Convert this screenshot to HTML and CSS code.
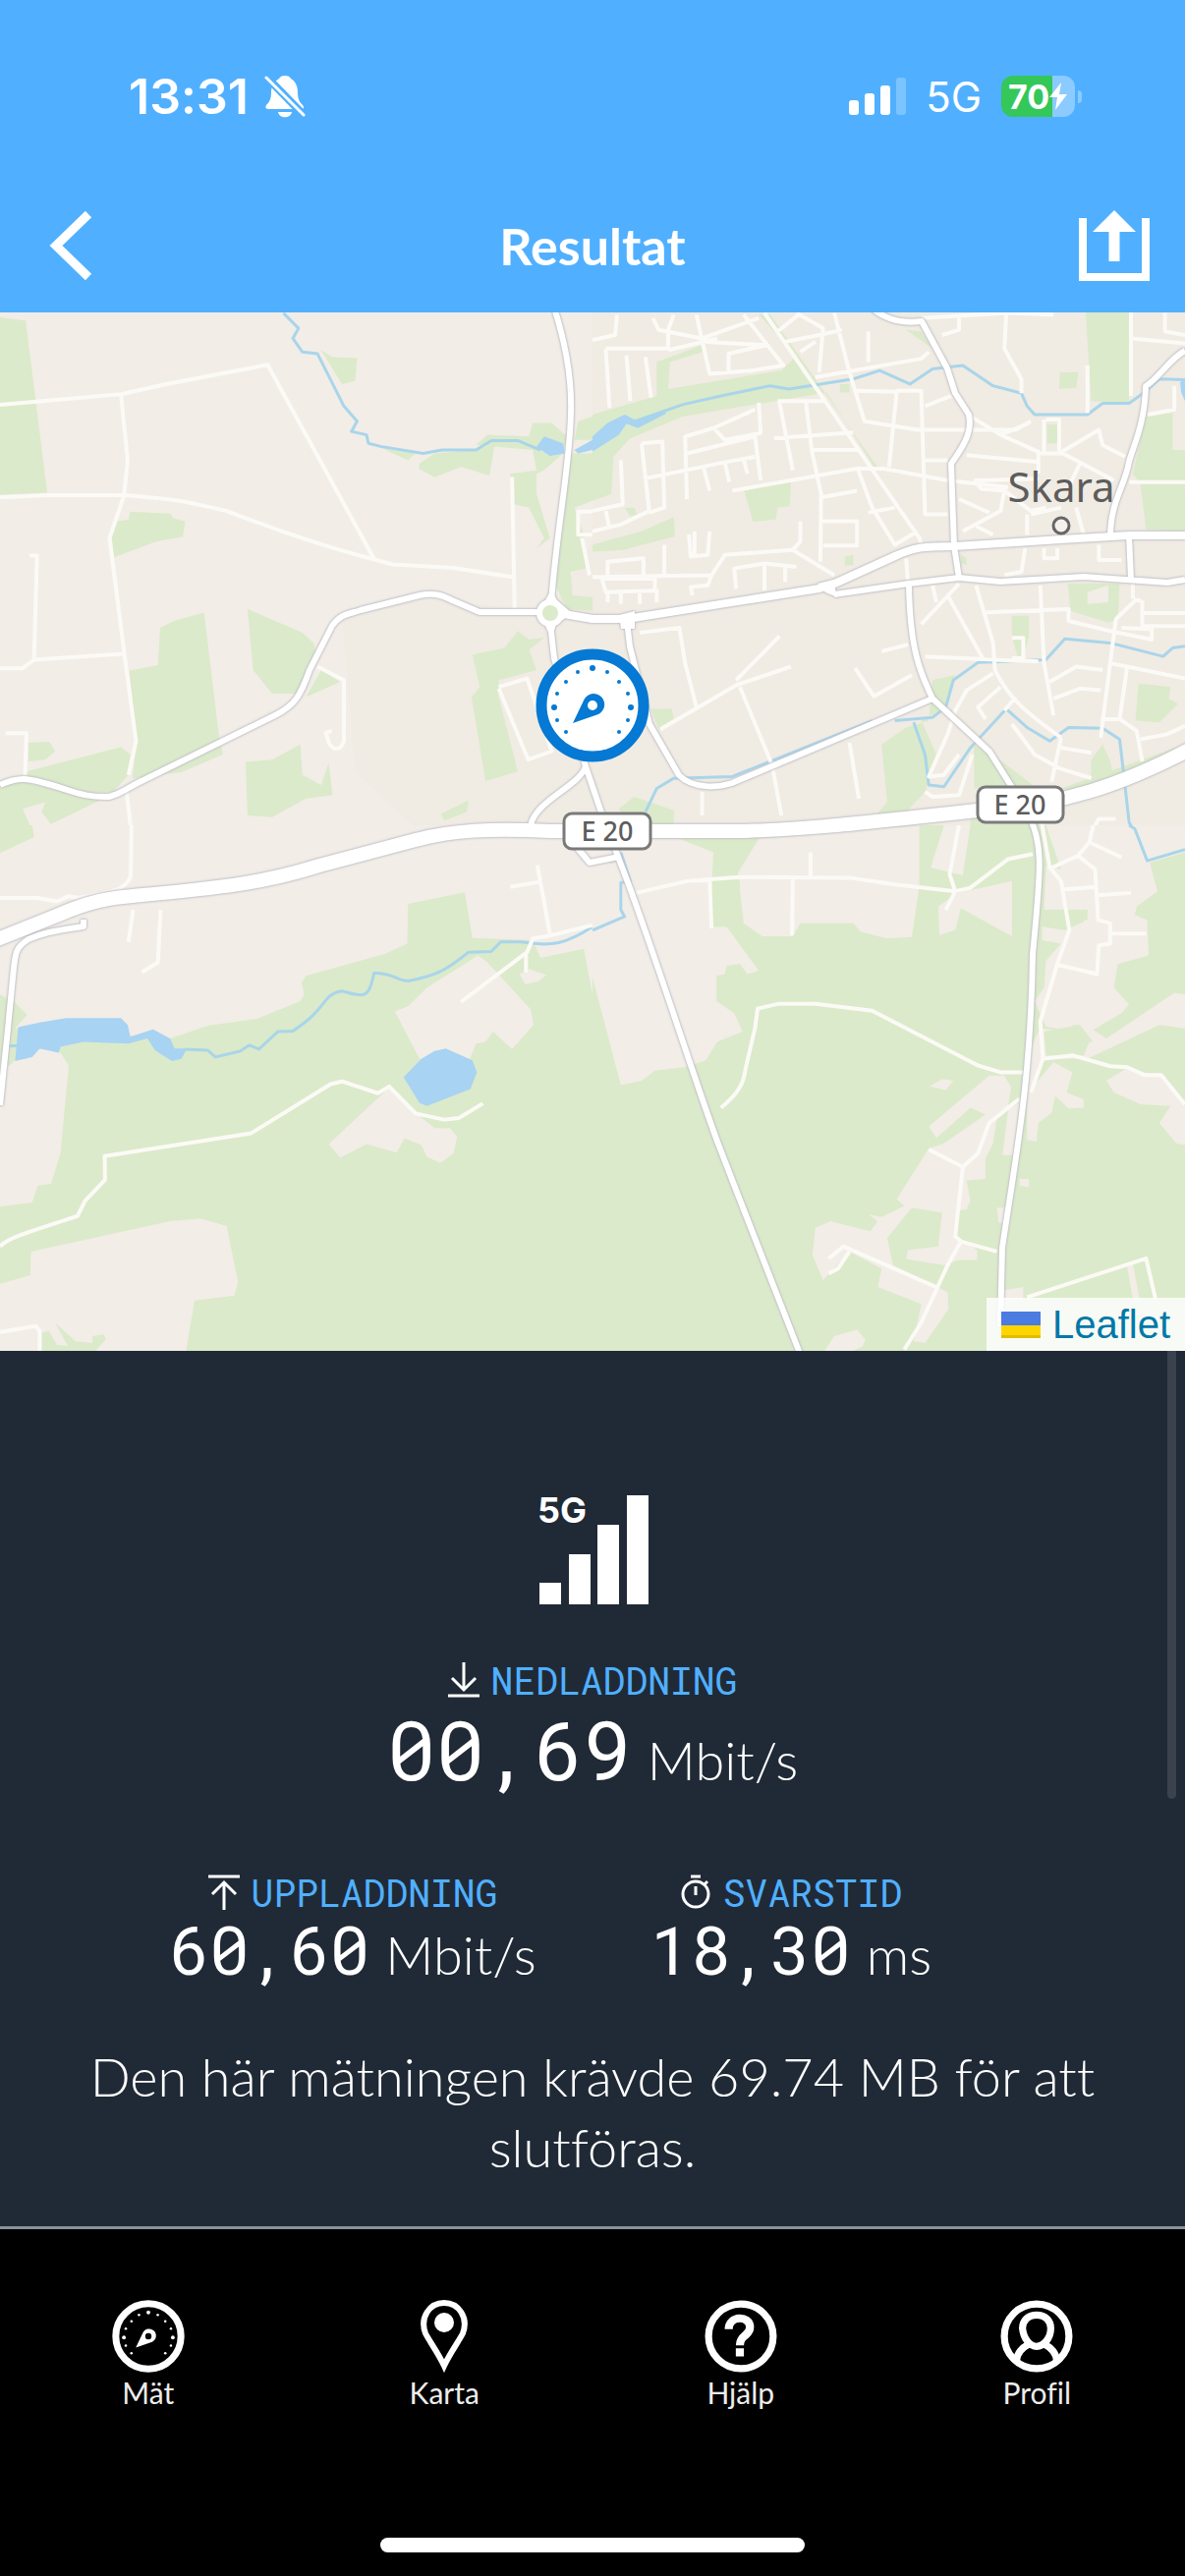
FILE: index.html
```html
<!DOCTYPE html>
<html lang="sv">
<head>
    <meta charset="UTF-8">
    <meta name="viewport" content="width=device-width, initial-scale=1.0">
    <title>Resultat</title>
    <link rel="stylesheet" href="styles.css">
</head>
<body>
    <svg class="sprite" aria-hidden="true">
        <symbol id="compass" viewBox="-58 -58 116 116">
            <circle r="52" stroke="currentColor" stroke-width="11"/>
            <g fill="currentColor">
                <circle cy="-38" r="3"/>
                <circle cx="-39" cy="2" r="3"/><circle cx="39" cy="2" r="3"/>
                <circle cx="-15" cy="-34" r="2"/><circle cx="15" cy="-34" r="2"/>
                <circle cx="-27" cy="-24" r="2"/><circle cx="27" cy="-24" r="2"/>
                <circle cx="-36" cy="-12" r="2"/><circle cx="36" cy="-12" r="2"/>
                <circle cx="-36" cy="15" r="2"/><circle cx="36" cy="15" r="2"/>
                <circle cx="-27" cy="27" r="2"/><circle cx="27" cy="27" r="2"/>
                <path fill-rule="evenodd" d="M-20 18 L-9 -5 A11 11 0 1 1 6 9 Z M5 0 A5 5 0 1 0 -5 0 A5 5 0 1 0 5 0 Z"/>
            </g>
        </symbol>
    </svg>

    <header class="header">
        <div class="status-bar">
            <div class="status-left">
                <span class="time">13:31</span>
                <svg class="bell" viewBox="0 0 42 44" aria-label="Ljud av">
                    <path fill="#fff" d="M21 1C24 1 26 2 27 4C32 7 34 12 34 18C34 25 36 28 39 31C41 33 40 35 38 35H4C1 35 1 33 2 31C5 28 7 25 7 18C7 12 10 7 15 4C16 2 18 1 21 1ZM14 38H28C27 45 15 45 14 38Z"/>
                    <path stroke="#50b0ff" stroke-width="8" d="M0 0L42 43"/>
                    <path stroke="#fff" stroke-width="3" stroke-linecap="round" d="M2 3L40 41"/>
                </svg>
            </div>
            <div class="status-right">
                <svg class="bars" viewBox="0 0 58 38" aria-hidden="true" fill="#fff">
                    <rect y="23" width="10" height="15" rx="3"/>
                    <rect x="16" y="16" width="10" height="22" rx="3"/>
                    <rect x="32" y="8" width="10" height="30" rx="3"/>
                    <rect x="48" width="10" height="38" rx="3" opacity="0.25"/>
                </svg>
                <span class="network">5G</span>
                <div class="battery">
                    <span class="battery-level">70</span>
                    <svg class="bolt" viewBox="0 0 18 28" aria-hidden="true"><path fill="#fff" d="M12 0L0 15H8L6 28L18 12H10Z"/></svg>
                </div>
            </div>
        </div>
        <nav class="nav-bar">
            <button class="nav-btn" aria-label="Tillbaka">
                <svg viewBox="0 0 72 72"><path fill="none" stroke="#fff" stroke-width="9" d="M54 4L21 36L54 68"/></svg>
            </button>
            <h1 class="title">Resultat</h1>
            <button class="nav-btn" aria-label="Dela">
                <svg viewBox="0 0 72 72" fill="none" stroke="#fff">
                    <path stroke-width="8" d="M4 8V68H68V8"/>
                    <path stroke-width="11" d="M36 20V52"/>
                    <path fill="#fff" stroke="none" d="M36 0L58 22H14Z"/>
                </svg>
            </button>
        </nav>
    </header>

    <main>
        <div class="map">
            <svg class="map-canvas" viewBox="0 318 1206 1057" role="img" aria-label="Karta över Skara">
                <!-- nordväst -->
                <svg class="tile" x="0" y="310" width="603" height="540" viewBox="0 0 1568 1568" preserveAspectRatio="none">
                    <rect class="land" width="1568" height="1568"/>
                    <path class="town" d="M905 920L1130 870L1450 910L1568 700V1568H1120L940 1380Z"/>
                    <path class="green" d="M0 38L68 48L125 556L0 562ZM345 612L450 618L460 632L490 640L484 686L415 700L300 748L295 670L310 640L340 636ZM655 900L800 970L830 1000L838 1040L800 1150L720 1150L670 1080ZM850 1080L900 1115L810 1160ZM424 955L460 935L540 910L580 1280L590 1330L480 1382L350 1400L362 1290L342 1082L418 1066ZM75 1295L130 1292L146 1320L120 1345L75 1350ZM70 1380L320 1308L345 1330L340 1390L300 1440L200 1445L70 1410ZM0 1420L60 1410L200 1450L265 1465L135 1535L110 1500L120 1470L60 1490L90 1568H0ZM650 1352L720 1345L795 1300L800 1390L850 1420L870 1355L880 1450L810 1460L720 1515L655 1510Z"/>
                    <path class="green" d="M1250 1035L1335 1015L1370 965L1400 990L1440 985L1400 1020L1420 1080L1320 1110L1320 1160L1370 1380L1285 1408L1248 1160L1270 1130ZM1168 1505L1240 1465L1235 1500L1175 1525ZM1010 425L1100 440L1080 460ZM1110 470L1150 440L1260 430L1310 410L1295 505L1220 480L1150 510L1108 485ZM1260 415L1290 385L1400 390L1410 350L1460 350L1500 390L1490 440L1440 490L1420 500L1420 560L1455 690L1420 720L1440 690L1400 600L1360 590L1350 500L1420 490L1410 430ZM1568 330L1530 345L1520 400H1568ZM1510 440H1568V580L1520 600L1545 680L1550 780L1510 790L1515 860L1568 865V905L1500 900L1470 830L1490 600ZM850 135L880 155L945 158L940 225L905 235Z"/>
                    <path class="stream" d="M750 25L790 70L775 100L800 140L840 145L910 300L945 345L930 375L970 385L975 410L1010 420L1120 440L1170 430L1260 430L1300 402L1370 402L1430 430"/>
                    <path class="water" d="M1420 420L1440 390L1490 410L1495 440L1455 447ZM1520 430L1568 400V430L1530 440Z"/>
                    <path class="minor" d="M0 296L320 265L440 235L708 178L990 752M320 265L338 460L328 565L290 690L330 1040L360 1290L340 1390M0 570L130 563L330 563C480 575 520 590 600 610C760 680 900 730 1040 768L1200 778L1358 806M1355 510L1362 900M78 742H98L90 1050L60 1075H0M90 1050L325 1032M15 1267H70L66 1400M335 1440L348 1568M840 1070L910 1110V1290C900 1330 870 1310 868 1285L862 1265L878 1260M1320 1130L1395 1105L1460 1320L1398 1345L1320 1135M1568 612H1530V680L1568 680M1540 690L1560 800"/>
                </svg>
                <!-- nordost -->
                <svg class="tile" x="603" y="310" width="603" height="540" viewBox="0 0 1568 1568" preserveAspectRatio="none">
                    <rect class="town" width="1568" height="1568"/>
                    <path class="green" d="M0 325L170 270L170 170L290 120L290 140L205 170L200 250L500 195L540 150L440 30H470L760 490L745 480L620 260L240 330L100 395L55 450L50 560L0 580ZM1305 22H1420V290L1320 285ZM1237 200L1285 200L1280 245L1235 250ZM1465 330L1535 320V430H1568V670L1465 665L1450 530L1430 500ZM400 545L525 525L522 595L490 600L485 635L425 642ZM0 710L130 670L215 628L218 685L80 725L0 730ZM85 600L110 600L118 620L100 625ZM1203 355H1237V410H1203ZM655 235H680V260H655ZM668 745L690 740V770L668 772ZM975 740L990 750V770L975 765ZM1258 825H1395L1390 930L1365 940L1265 905ZM1110 920H1155V980L1140 1040H1125L1110 980ZM1445 1120L1530 1130L1525 1165L1550 1180L1500 1235L1437 1230ZM155 1195L210 1195L215 1225L175 1255ZM70 1490L110 1455L215 1495L215 1539H100ZM765 1300L830 1250L890 1230L900 1110L960 1095L935 1190L870 1230L910 1330L880 1440L830 1500L750 1510L780 1470ZM1010 1300L1060 1330L1165 1420L1010 1430ZM1320 1345L1350 1300L1370 1350L1380 1400L1320 1395ZM1240 1430L1568 1300V1320L1300 1440ZM830 75L870 80L900 130ZM1000 1539V1500H1180V1568H1000Z"/>
                    <path class="land" d="M1310 850L1365 830V880L1310 885ZM1290 180H1315V230H1300Z"/>
                    <path class="water" d="M0 390L40 350L85 325L120 345L190 315L195 322L120 365L90 352L70 385L0 435ZM1555 230L1568 220V285L1558 260Z"/>
                    <path class="stream" d="M100 350L240 295L340 270L470 240L520 250L690 220L760 195L840 235L900 190L980 180L1060 240L1135 262L1150 300L1170 325L1310 325L1350 292L1420 292L1460 260L1500 220L1568 222M1568 1010L1535 1015L1510 1040L1370 1000L1250 988L1200 1050L1020 1058L955 1110L935 1190L900 1220L800 1230M740 1230L370 1395L215 1400L170 1430L140 1500M850 1235L880 1330L890 1420L930 1425L1000 1310L1095 1195L1150 1250L1210 1290L1260 1250L1350 1252L1395 1285L1405 1380L1420 1530L1440 1568"/>
                    <path class="minor" d="M0 105L60 90L65 30M35 130H200L200 75L215 30M35 130L45 305M90 150L100 285M140 155L155 275M160 40L175 75L290 100L440 40M200 135L330 100M275 30L310 205L420 195L505 180L400 30M300 110L460 120L360 145L360 200M455 25L865 690L870 710M540 25L610 70L600 200M490 80L550 25M510 110L600 90L660 75M640 25L680 200L720 345L860 370H1120L1160 345M550 140L590 110M590 215L870 160L890 140M730 80V170M490 285H620M495 290L530 490M565 290L580 430L605 560L603 760M440 290L445 380L350 400L320 365L245 390L250 575M430 310L320 365M480 395L690 378M250 440L430 390L445 520M580 430L710 430M130 410L150 610L75 650L0 670M130 410L185 405L190 600L150 615M135 515L355 465L430 450M295 485L310 550M350 465L362 525M400 455L410 500M370 550L700 485H770L940 520L1100 540M75 460L80 590L0 610M35 610L45 660M605 570L700 550M700 480L740 600L800 710L860 670M730 615L800 600M600 640H700V712H610M550 640V700L530 725M640 800L530 725L350 740L315 800M310 670L305 740L260 745L255 680M270 670V740M190 710V800M0 805L315 800L305 830L260 835L265 860M40 800V760L135 750V800M25 810L35 850L170 845V880M25 810H165V850M40 850V880M75 850V885M125 850V885M380 840L375 780L455 765V845M455 765L540 775M510 770V820M700 255L805 258L785 480M805 255H870L880 620H940M880 300L950 270M880 460H940M1000 330L1080 385L1180 435V500M1080 385L1155 350M1095 25L1090 130L1135 220V262M870 40L1095 25L1220 30M1310 180V320M1200 340H1235V440H1195V340M1235 440L1340 370L1350 415L1410 450M1180 440H1245L1380 520M990 445L1180 465M1290 470L1260 540M1010 520L1180 515M1010 520L1030 545L1090 550L1080 610L980 670M970 575L1050 615M1090 550L1160 610L1200 600M1150 620V680M1280 600L1300 680M1240 600L1160 620M1425 20V270M1425 100L1568 115M1515 25V80L1568 90M1420 525H1568M1470 325L1540 310V240M1340 710V755H1400M1195 720V750H1230V720M1145 720L1135 790L1090 800M1015 655L1060 680M830 750L835 825M925 90L970 75V40M1185 830L1195 1060L1220 1215M940 860L1035 1050M970 825L870 945M1015 830L1060 1000L1065 1080C1100 1160 1140 1200 1240 1280M900 830L910 880M1035 910L1260 900V935L1370 965L1480 990V960L1400 955M1440 870L1385 930L1370 1060L1345 1280M1440 870L1455 880V950H1568M1455 912H1568M1430 825V870M880 1040L1065 1050L1180 1055M765 1025L835 1005M1110 985H1140V1045H1110M1370 1060L1568 1105M1210 1115L1280 1070L1350 1080M1220 1165L1290 1135L1345 1140M1415 1070L1395 1225L1345 1225M1395 1225L1440 1260L1455 1350M1450 1285L1520 1270L1568 1245M1080 1130L1020 1190L1040 1225M1060 1090L990 1140L960 1200L940 1270L890 1395L930 1390L970 1330M1120 1160L1090 1200M1110 1240L1170 1330L1235 1370L1320 1400M1240 1280L1215 1410M1240 1310L1320 1325M125 970L230 955L245 1060L275 1190M180 1255L380 1125L525 1070M380 1110L495 980M390 1130L475 1360L500 1510M695 1075L745 1158L845 1095M680 1295L705 1460M290 1440V1510M880 1440L900 1455L970 1450L1005 1330M1190 1510V1539M1320 1560L1340 1520L1385 1520"/>
                </svg>
                <!-- sydväst -->
                <svg class="tile" x="0" y="840" width="603" height="540" viewBox="0 0 1568 1568" preserveAspectRatio="none">
                    <rect class="green" width="1568" height="1568"/>
                    <path class="land" d="M0 0H1568V500L1545 365L1430 392L1410 340L1250 333L1230 198L1080 232L1078 350L1020 380L810 445L798 465L805 500L795 520L680 572L550 592L450 630L330 620L40 600L72 560L40 525L0 500ZM0 700L30 700L110 660L160 672L182 710L160 970L135 1060L100 1065L85 1115L0 1127ZM1045 550L1080 535L1130 480L1265 385L1290 405L1405 545L1412 590L1355 662L1305 610L1285 640L1260 645L1240 700L1110 690ZM1375 440L1400 425L1446 443L1425 462L1390 470ZM1030 775L1100 850L1150 895L1190 895L1210 920L1200 970L1165 998L1130 980L1115 945L1070 925L1050 968L970 942L900 983L870 942ZM0 1355L80 1330L82 1260L450 1170L530 1162L600 1185L630 1350L620 1390L515 1405L490 1568H0Z"/>
                    <path class="green" d="M0 0H85L90 35L0 82ZM145 1470L200 1525L245 1530L245 1510L275 1505L280 1520L255 1550V1568H110V1500L130 1495L150 1535L180 1540ZM20 600L40 600L35 700L20 715Z"/>
                    <path class="water" d="M48 597L105 583L175 570L320 570L338 590L345 625L405 603L450 630L462 660L495 660L480 690L455 697L410 665L390 630L340 645L220 640L160 655L155 672L105 660L85 685L40 697ZM1068 745L1115 690L1150 667L1180 660L1250 695L1262 730L1245 780L1130 830L1110 820Z"/>
                    <path class="stream" d="M20 652H45M490 662L550 665L570 685L635 668L660 650L685 662L735 610L775 608C870 540 850 500 905 490C970 510 975 510 990 437C1040 435 1050 460 1080 460C1160 445 1190 420 1240 375L1300 373L1325 345L1380 345C1460 360 1500 350 1568 300"/>
                    <path class="minor" d="M348 0L346 150C330 200 280 195 210 215L180 210L150 225L100 215H0M352 250L340 345M425 250L418 405L375 435M1422 118L1455 320M1350 182L1425 168M1568 295L1460 325L1410 335L1395 375L1220 522M1392 380V435M0 1245C20 1220 80 1200 205 1155L225 1110L278 1048L277 978L665 910L875 765L905 757L1000 792L1030 772L1100 852L1175 870L1215 865L1278 822M0 1498L95 1480L105 1495V1568"/>
                </svg>
                <!-- sydost -->
                <svg class="tile" x="603" y="840" width="603" height="540" viewBox="0 0 1568 1568" preserveAspectRatio="none">
                    <rect class="green" width="1568" height="1568"/>
                    <path class="land" d="M0 40H230L320 80L310 300L355 300L440 430L410 440L390 410L355 415L350 440L328 445V520L375 555L397 610L330 640L300 695L245 715L165 725L130 755L75 768L0 450ZM440 40L865 0V180L845 330L780 335L710 315L690 290L550 290L530 328L450 328L400 290L385 140ZM930 0H1000L980 148L895 125ZM915 240L965 200L1110 165V328L975 245L960 310L918 325ZM1200 0H1568V80L1475 110L1495 195L1440 240L1435 265L1468 280L1472 385L1390 410L1380 480L1420 530L1400 555L1325 605L1360 630L1540 495L1568 500V600L1500 590L1310 690L1190 690L1160 780L1220 700L1270 730L1255 790L1300 810L1300 835L1260 838L1225 800L1215 850L1180 880L1175 935L1150 930L1150 680L1185 600L1270 610L1200 595L1170 520L1195 480L1200 400L1240 350L1190 340L1190 300L1250 310L1300 285L1310 250L1195 250L1200 120L1240 130ZM1050 740L1090 740L1108 775L1100 830L1070 870L1060 940L1040 985L1040 1045L990 1050L1000 1110L990 1135L965 1140L965 1215L1018 1255L1018 1285L970 1285L930 1300L830 1282L835 1255L915 1245L925 1145L845 1130L780 1220L795 1300L940 1380L942 1430L880 1530L850 1525L870 1415L755 1365L765 1310L680 1260L610 1345L582 1270L590 1190L630 1170L735 1200L755 1170L730 1150L765 1158L825 1125L805 1105L890 955L930 940L1040 855L1000 835L910 925L890 890ZM892 772L925 750L955 755L935 783ZM1100 840L1130 820L1115 975L1085 975ZM1130 1045L1155 1045V1070L1130 1065ZM1070 1130H1095V1175H1075ZM1360 755L1410 720L1505 740L1568 830V945L1545 940L1500 880L1530 830L1450 825L1380 790ZM605 1568L640 1510L700 1490L722 1520L715 1540L660 1568ZM1085 1375L1140 1365V1400H1085ZM1415 1305L1430 1295L1448 1400H1430Z"/>
                    <path class="green" d="M320 165H390V300H320ZM1200 250H1310V280H1200ZM1195 610L1290 590L1315 640L1300 680L1200 680ZM1270 590L1290 590L1325 640H1290ZM30 100L70 80L75 100L50 115Z"/>
                    <path class="stream" d="M75 80L100 165L75 170V250L85 270L0 310M1420 0L1435 10L1468 105L1568 72"/>
                    <path class="minor" d="M115 200L250 165L390 153L680 155L800 175L960 195L1000 185L1100 100L1165 85M310 155L315 305M530 160L528 325M577 80V150M970 0L945 145L960 195L935 250M340 835C390 790 400 760 405 720L430 600L437 542L490 528H590L740 548L1020 710L1080 730H1145M1190 0L1210 125L1240 165L1262 310L1230 410L1185 580L1192 690L1160 790M1210 128L1285 90L1330 130L1338 280L1370 290V350L1340 355L1335 440L1230 412M1370 320H1465M1285 90L1315 50L1400 95M1325 0L1315 50M1240 190L1335 182M1335 207L1425 200M1195 690L1270 680L1370 712L1415 715L1460 738H1505L1568 825M1130 808L1050 880L1020 970L980 1010L960 1215L975 1230L1070 1260M890 958L980 1010M975 1230L940 1300L870 1470L825 1550M625 1280L665 1245L910 1365M680 1260L650 1310L625 1325M1150 1395L1465 1280L1490 1400"/>
                </svg>

                <g class="roads">
                    <path class="road" d="M563 310C576 350 582 390 581 420C580 475 567 534 561 613M0 799C20 790 30 793 45 797C75 805 85 812 111 811C123 808 123 806 140 797L280 728C300 718 306 708 315 682L338 637C347 625 352 626 367 621L427 606C442 603 450 606 460 611L488 623H550M560 634L564 670L596 780C590 800 545 815 540 840M596 780L612 827L632 880C660 950 710 1110 732 1167C760 1240 790 1315 815 1380M585 860L600 878L630 872M888 314C900 324 915 330 938 327L964 375L972 400L986 422C990 440 980 455 968 472L971 556L976 588M1206 357C1190 365 1180 385 1166 393C1165 430 1155 450 1149 470C1145 495 1130 510 1130 547M849 605L925 594L976 588L1018 592L1103 587L1188 593L1206 590M1149 545L1151 589M925 594C926 670 940 690 949 711L1007 765L1045 825C1062 860 1060 880 1051 971C1049 1100 1035 1170 1020 1270L1018 1350M638 632L641 658L661 737L691 789C705 803 730 802 745 797L949 711M85 936V943C50 948 40 951 29 956C15 965 16 971 14 985L8 1047L0 1125"/>
                    <path class="road road-wide" d="M568 624L603 630H638L834 599L845 596L911 566C930 557 940 556 972 556L1080 549L1149 545H1206"/>
                    <path class="road road-trunk" d="M-5 957L60 931C90 918 110 914 135 912C220 904 265 900 325 881L423 855C460 845 500 843 560 846H740C800 846 860 840 994 825C1080 820 1140 800 1216 760"/>
                    <path fill="#fff" d="M545 624L555 611L561 600L567 611L582 624L566 636L561 650L555 637ZM832 594L848 590L852 608L840 603ZM630 626L646 622V640H632Z"/>
                    <circle fill="#fff" cx="560" cy="624" r="14"/>
                </g>
                <circle class="green" cx="560" cy="624" r="8"/>

                <text class="place" x="1080" y="511">Skara</text>
                <circle fill="#f4f1ec" stroke="#666" stroke-width="3" cx="1080" cy="535" r="8"/>
                <g class="shield">
                    <rect x="574" y="828" width="88" height="36" rx="8"/>
                    <text x="618" y="856">E 20</text>
                    <rect x="995" y="801" width="87" height="36" rx="8"/>
                    <text x="1038" y="829">E 20</text>
                </g>
                <use class="marker" href="#compass" x="545" y="660" width="116" height="116"/>
            </svg>
            <div class="attribution">
                <a href="#">
                    <svg class="flag" viewBox="0 0 40 27" aria-hidden="true">
                        <rect width="40" height="14" fill="#4c7be1"/>
                        <rect y="14" width="40" height="13" fill="#ffd500"/>
                        <rect y="24" width="40" height="3" fill="#e0bc00"/>
                    </svg>
                    Leaflet
                </a>
            </div>
        </div>

        <section class="result">
            <svg class="signal" viewBox="-4 -12 116 124" fill="#fff" role="img" aria-label="5G, full signal">
                <text x="-2" y="28">5G</text>
                <rect y="89" width="22" height="22"/>
                <rect x="30" y="60" width="22" height="51"/>
                <rect x="59" y="30" width="22" height="81"/>
                <rect x="89" width="22" height="111"/>
            </svg>

            <div class="measure measure-main">
                <h2 class="label">
                    <svg class="label-icon" viewBox="0 0 32 36" fill="none" stroke="#fff" stroke-width="3"><path d="M16 0V27M4 16L16 28L28 16M0 34H32"/></svg>
                    NEDLADDNING
                </h2>
                <p class="value">00,69<span class="unit">Mbit/s</span></p>
            </div>

            <div class="measure-row">
                <div class="measure">
                    <h2 class="label">
                        <svg class="label-icon" viewBox="0 0 32 36" fill="none" stroke="#fff" stroke-width="3"><path d="M0 2H32M16 36V9M4 20L16 8L28 20"/></svg>
                        UPPLADDNING
                    </h2>
                    <p class="value">60,60<span class="unit">Mbit/s</span></p>
                </div>
                <div class="measure">
                    <h2 class="label">
                        <svg class="label-icon" viewBox="0 0 32 36" fill="none" stroke="#fff" stroke-width="3"><circle cx="16" cy="20" r="13"/><path d="M11 2H21M16 12V21M25 10L28 7"/></svg>
                        SVARSTID
                    </h2>
                    <p class="value">18,30<span class="unit">ms</span></p>
                </div>
            </div>

            <p class="note">Den här mätningen krävde 69.74 MB för att slutföras.</p>
            <div class="scrollbar"></div>
        </section>
    </main>

    <footer class="tab-bar">
        <nav class="tabs">
            <a class="tab" href="#">
                <svg class="tab-icon"><use href="#compass"/></svg>
                Mät
            </a>
            <a class="tab" href="#">
                <svg class="tab-icon" viewBox="0 0 74 74">
                    <path stroke="#fff" stroke-width="6" d="M37 67C31 54 22 42 18 34C12 18 22 3 37 3C52 3 62 18 56 34C52 42 43 54 37 67Z"/>
                    <circle fill="#fff" cx="37" cy="23" r="10"/>
                </svg>
                Karta
            </a>
            <a class="tab" href="#">
                <svg class="tab-icon" viewBox="0 0 72 72" stroke="#fff">
                    <circle cx="36" cy="36" r="32" stroke-width="7"/>
                    <path stroke-width="8" d="M24 29C24 15 45 15 45 27C45 36 35 34 35 45M35 48V56"/>
                </svg>
                Hjälp
            </a>
            <a class="tab" href="#">
                <svg class="tab-icon" viewBox="0 0 72 72" stroke="#fff" stroke-width="7">
                    <circle cx="36" cy="36" r="32"/>
                    <path d="M36 15C27 15 22 21 22 28C23 38 29 46 36 46C43 46 50 38 50 28C50 21 45 15 36 15Z"/>
                    <path d="M16 60C17 52 21 48 28 44M56 60C55 52 51 48 44 44"/>
                </svg>
                Profil
            </a>
        </nav>
        <div class="home-indicator"></div>
    </footer>
</body>
</html>
```

FILE: styles.css
```css
* {
    box-sizing: border-box;
    margin: 0;
    padding: 0;
}

body {
    min-height: 100vh;
    display: flex;
    flex-direction: column;
    background-color: #000;
    color: #fff;
    font-family: 'Lato', sans-serif;
    font-variant-ligatures: none;
}

svg {
    display: block;
}

.sprite {
    position: absolute;
    width: 0;
    height: 0;
}

/* Header */
.header {
    background-color: #50b0ff;
    padding-top: 68px;
}

.status-bar {
    display: flex;
    justify-content: space-between;
    align-items: center;
    height: 60px;
    padding: 0 112px 0 131px;
    font-family: 'Inter', sans-serif;
}

.status-left,
.status-right {
    display: flex;
    align-items: center;
}

.status-left {
    gap: 16px;
}

.status-right {
    gap: 20px;
}

.time {
    font-size: 50px;
    font-weight: 600;
}

.bell {
    width: 42px;
    height: 44px;
}

.bars {
    width: 58px;
    height: 38px;
}

.network {
    font-size: 42px;
}

.battery {
    position: relative;
    display: flex;
    align-items: center;
    width: 75px;
    height: 42px;
    padding-left: 7px;
    border-radius: 12px;
    background: linear-gradient(to right, #34c759 70%, #8bcbff 70%);
}

.battery::after {
    content: '';
    position: absolute;
    right: -7px;
    width: 4px;
    height: 13px;
    border-radius: 0 4px 4px 0;
    background-color: #8bcbff;
}

.battery-level {
    font-size: 34px;
    font-weight: 700;
}

.bolt {
    width: 18px;
    height: 28px;
}

.nav-bar {
    display: flex;
    justify-content: space-between;
    align-items: center;
    height: 190px;
    padding: 86px 36px 32px;
}

.nav-btn {
    background: none;
    border: none;
    cursor: pointer;
}

.nav-btn svg {
    width: 72px;
    height: 72px;
}

.title {
    font-size: 52px;
    font-weight: 700;
}

/* Karta */
.map {
    position: relative;
}

.map-canvas {
    width: 100%;
    height: auto;
}

.tile path {
    vector-effect: non-scaling-stroke;
}

.land {
    fill: #f2ede7;
}

.town {
    fill: #f0ebe3;
}

.green {
    fill: #dbeaca;
}

.water {
    fill: #a8d3f3;
}

.stream {
    fill: none;
    stroke: #a9d5ea;
    stroke-width: 3;
    stroke-linejoin: round;
}

.minor {
    fill: none;
    stroke: #fcfaf6;
    stroke-width: 4;
    stroke-linejoin: round;
}

.roads {
    filter: drop-shadow(0 0 1px #b4b4bc) drop-shadow(0 0 1px #c8c8ce);
}

.road {
    fill: none;
    stroke: #fff;
    stroke-width: 6;
    stroke-linejoin: round;
}

.road-wide {
    stroke-width: 8;
}

.road-trunk {
    stroke-width: 14;
}

.place {
    fill: #5c5c5c;
    font-family: 'Noto Sans', sans-serif;
    font-size: 42px;
    text-anchor: middle;
}

.shield rect {
    fill: #fff;
    stroke: #7a7a7a;
    stroke-width: 3;
}

.shield text {
    fill: #5c5c5c;
    font-family: 'Noto Sans', sans-serif;
    font-size: 27px;
    font-weight: 500;
    text-anchor: middle;
}

.marker {
    color: #0579d3;
    fill: #fff;
}

.attribution {
    position: absolute;
    right: 0;
    bottom: 0;
    padding: 0 15px;
    background: rgba(255, 255, 255, 0.8);
    font-family: 'Liberation Sans', Arial, sans-serif;
    font-size: 40px;
    line-height: 54px;
}

.attribution a {
    display: flex;
    align-items: center;
    gap: 12px;
    color: #0078a8;
    text-decoration: none;
}

.flag {
    width: 40px;
    height: 27px;
}

/* Resultat */
.result {
    position: relative;
    padding: 135px 80px 44px;
    background-color: #202a36;
    border-bottom: 3px solid #8b9299;
    text-align: center;
}

.signal {
    width: 116px;
    height: 124px;
    margin: 0 auto 52px;
    font-family: 'Inter', sans-serif;
    font-size: 36px;
    font-weight: 700;
}

.label {
    display: flex;
    justify-content: center;
    align-items: center;
    gap: 12px;
    height: 48px;
    color: #50b0ff;
    font-family: 'Roboto Mono', 'Liberation Mono', monospace;
    font-size: 38px;
    font-weight: 400;
}

.label-icon {
    width: 32px;
    height: 36px;
}

.value {
    font-family: 'Roboto Mono', 'DejaVu Sans Mono', monospace;
    font-size: 68px;
    line-height: 68px;
}

.measure-main .value {
    font-size: 83px;
    line-height: 92px;
}

.unit {
    margin-left: 16px;
    font-family: 'Lato', sans-serif;
    font-size: 54px;
    font-weight: 300;
}

.measure-row {
    display: grid;
    grid-template-columns: 1fr 1fr;
    margin: 64px 98px 0 56px;
}

.note {
    margin-top: 54px;
    font-size: 54px;
    font-weight: 300;
    line-height: 72px;
}

.scrollbar {
    position: absolute;
    top: 0;
    right: 9px;
    width: 9px;
    height: 456px;
    border-radius: 0 0 5px 5px;
    background-color: #39424d;
}

/* Flikar */
.tab-bar {
    flex: 1;
    display: flex;
    flex-direction: column;
    justify-content: space-between;
    align-items: center;
    padding: 72px 0 24px;
}

.tabs {
    display: grid;
    grid-template-columns: repeat(4, 1fr);
    width: 100%;
}

.tab {
    display: flex;
    flex-direction: column;
    align-items: center;
    color: #ececec;
    font-size: 30px;
    line-height: 40px;
    text-decoration: none;
}

.tab-icon {
    width: 74px;
    height: 74px;
    color: #fff;
    fill: none;
}

.home-indicator {
    width: 432px;
    height: 15px;
    border-radius: 8px;
    background-color: #fff;
}
```
